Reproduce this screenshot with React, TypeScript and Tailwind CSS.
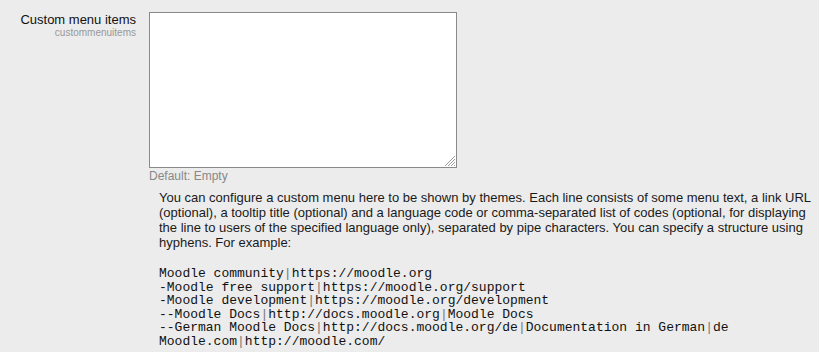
import React from "react";

const exampleLines = [
  ["Moodle community", "https://moodle.org"],
  ["-Moodle free support", "https://moodle.org/support"],
  ["-Moodle development", "https://moodle.org/development"],
  ["--Moodle Docs", "http://docs.moodle.org", "Moodle Docs"],
  [
    "--German Moodle Docs",
    "http://docs.moodle.org/de",
    "Documentation in German",
    "de",
  ],
  ["Moodle.com", "http://moodle.com/"],
];

const ResizeGrip = () => (
  <svg
    width="12"
    height="12"
    viewBox="0 0 12 12"
    className="absolute bottom-[1px] right-[1px]"
  >
    <line x1="11" y1="1" x2="1" y2="11" stroke="#9a9a9a" strokeWidth="1" />
    <line x1="11" y1="4" x2="4" y2="11" stroke="#9a9a9a" strokeWidth="1" />
    <line x1="11" y1="7" x2="7" y2="11" stroke="#9a9a9a" strokeWidth="1" />
    <line x1="11" y1="10" x2="10" y2="11" stroke="#9a9a9a" strokeWidth="1" />
  </svg>
);

export default function App() {
  return (
    <div className="h-[352px] w-full overflow-hidden bg-[#ececec] font-['Liberation_Sans',Arial,sans-serif]">
      <div className="flex gap-[13px] pt-[12px]">
        <div className="w-[136px] shrink-0 text-right">
          <div className="text-[13px] leading-[15px] text-[#111]">
            Custom menu items
          </div>
          <div className="text-[10px] leading-[12px] text-[#999]">
            custommenuitems
          </div>
        </div>

        <div className="flex-1">
          <div className="relative h-[156px] w-[308px]">
            <textarea className="block h-full w-full resize-none border border-[#8a8a8a] bg-white outline-none" />
            <ResizeGrip />
          </div>
          <div className="mt-[1px] text-[12px] leading-[15px] text-[#888]">
            Default: Empty
          </div>

          <div className="mt-[6px] pl-[10px] text-[#1a1a1a]">
            <p className="whitespace-nowrap text-[13px] leading-[15px]">
              You can configure a custom menu here to be shown by themes. Each
              line consists of some menu text, a link URL
              <br />
              (optional), a tooltip title (optional) and a language code or
              comma-separated list of codes (optional, for displaying
              <br />
              the line to users of the specified language only), separated by
              pipe characters. You can specify a structure using
              <br />
              hyphens. For example:
            </p>
            <pre className="mt-[17px] font-['Liberation_Mono','Courier_New',monospace] text-[13px] leading-[13.5px] text-[#111]">
              {exampleLines.map((parts, i) => (
                <div key={i}>
                  {parts.map((part, j) => (
                    <React.Fragment key={j}>
                      {j > 0 && <span className="text-[#777]">|</span>}
                      {part}
                    </React.Fragment>
                  ))}
                </div>
              ))}
            </pre>
          </div>
        </div>
      </div>
    </div>
  );
}
